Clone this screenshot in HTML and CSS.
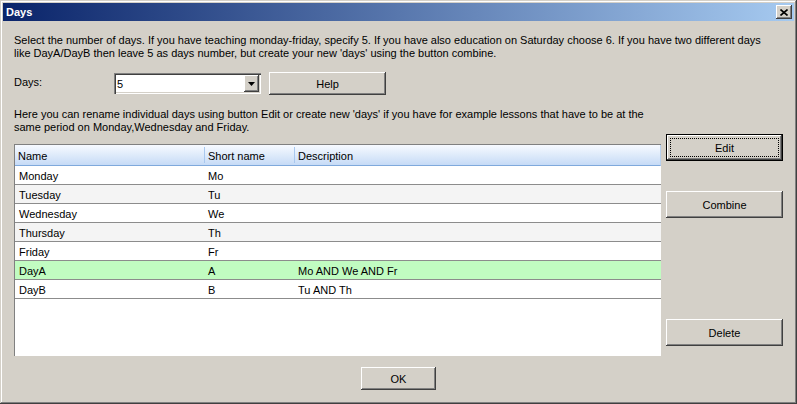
FILE: index.html
```html
<!DOCTYPE html>
<html>
<head>
<meta charset="utf-8">
<link rel="stylesheet" href="styles.css">
</head>
<body>
<div class="window">
    <div class="titleBar">
        <span class="titleText">Days</span>
        <span class="closeBtn">
            <svg width="8" height="7" viewBox="0 0 8 7"><path d="M0.5 0.5 L7.5 6.5 M7.5 0.5 L0.5 6.5" stroke="#000" stroke-width="1.6" fill="none"/></svg>
        </span>
    </div>

    <div class="content">
        <p class="intro">Select the number of days. If you have teaching monday-friday, specify 5. If you have also education on Saturday choose 6. If you have two different days<br>like DayA/DayB then leave 5 as days number, but create your new 'days' using the button combine.</p>

        <div class="daysRow">
            <span class="daysLabel">Days:</span>
            <div class="combo">
                <span class="comboValue">5</span>
                <span class="comboBtn">
                    <svg width="7" height="4" viewBox="0 0 7 4"><path d="M0 0 H7 L3.5 4 Z" fill="#000"/></svg>
                </span>
            </div>
            <div class="btn helpBtn">Help</div>
        </div>

        <div class="mainRow">
            <div class="leftCol">
                <p class="hint">Here you can rename individual days using button Edit or create new 'days' if you have for example lessons that have to be at the<br>same period on Monday,Wednesday and Friday.</p>

                <div class="grid">
                    <div class="gridHead">
                        <div class="hCell">Name</div>
                        <div class="hCell sep">Short name</div>
                        <div class="hCell sep">Description</div>
                    </div>
                    <div class="gridRow"><div class="cell">Monday</div><div class="cell">Mo</div><div class="cell"></div></div>
                    <div class="gridRow alt"><div class="cell">Tuesday</div><div class="cell">Tu</div><div class="cell"></div></div>
                    <div class="gridRow"><div class="cell">Wednesday</div><div class="cell">We</div><div class="cell"></div></div>
                    <div class="gridRow alt"><div class="cell">Thursday</div><div class="cell">Th</div><div class="cell"></div></div>
                    <div class="gridRow"><div class="cell">Friday</div><div class="cell">Fr</div><div class="cell"></div></div>
                    <div class="gridRow combined"><div class="cell">DayA</div><div class="cell">A</div><div class="cell">Mo AND We AND Fr</div></div>
                    <div class="gridRow"><div class="cell">DayB</div><div class="cell">B</div><div class="cell">Tu AND Th</div></div>
                </div>
            </div>

            <div class="sideButtons">
                <div class="btn sideBtn defaultBtn"><span class="focusRect">Edit</span></div>
                <div class="btn sideBtn">Combine</div>
                <div class="btn sideBtn deleteBtn">Delete</div>
            </div>
        </div>

        <div class="footer">
            <div class="btn okBtn">OK</div>
        </div>
    </div>
</div>
</body>
</html>
```

FILE: styles.css
```css
body{
    margin: 0;
    font-family: "Liberation Sans", Arial, sans-serif;
    font-size: 11px;
    color: #000;
}

.window{
    width: 797px;
    height: 404px;
    box-sizing: border-box;
    padding: 3px;
    background-color: #D4D0C8;
    box-shadow: inset -1px -1px #404040, inset 1px 1px #D4D0C8, inset -2px -2px #808080, inset 2px 2px #fff;
    display: flex;
    flex-direction: column;
}

.titleBar{
    height: 18px;
    background: linear-gradient(to right, #0A246A, #A6CAF0);
    display: flex;
    align-items: center;
    justify-content: space-between;
    padding: 0 2px 0 3px;
}

.titleText{
    color: #fff;
    font-weight: bold;
    font-size: 11px;
}

.closeBtn{
    width: 16px;
    height: 14px;
    box-sizing: border-box;
    background-color: #D4D0C8;
    box-shadow: inset -1px -1px #404040, inset 1px 1px #fff, inset -2px -2px #808080;
    display: flex;
    align-items: center;
    justify-content: center;
}

.content{
    flex: 1;
    padding: 0 11px 0 11px;
    display: flex;
    flex-direction: column;
}

p{
    margin: 0;
    line-height: 13px;
    white-space: nowrap;
}

.intro{
    margin-top: 13px;
}

.daysRow{
    display: flex;
    align-items: flex-start;
    margin-top: 12px;
    height: 23px;
}

.daysLabel{
    width: 100px;
    margin-top: 4px;
}

.combo{
    width: 147px;
    height: 21px;
    margin-top: 1px;
    box-sizing: border-box;
    background-color: #fff;
    box-shadow: inset 1px 1px #808080, inset 2px 2px #404040, inset -1px -1px #fff, inset -2px -2px #D4D0C8;
    display: flex;
    align-items: center;
    justify-content: space-between;
    padding: 0 2px 0 3px;
}

.comboValue{
    padding-top: 1px;
}

.comboBtn{
    width: 15px;
    height: 17px;
    box-sizing: border-box;
    background-color: #D4D0C8;
    box-shadow: inset -1px -1px #404040, inset 1px 1px #fff, inset -2px -2px #808080;
    display: flex;
    align-items: center;
    justify-content: center;
}

.btn{
    box-sizing: border-box;
    background-color: #D4D0C8;
    box-shadow: inset -1px -1px #404040, inset 1px 1px #fff, inset -2px -2px #808080;
    display: flex;
    align-items: center;
    justify-content: center;
}

.helpBtn{
    width: 117px;
    height: 23px;
    margin-left: 8px;
}

.mainRow{
    display: flex;
    margin-top: 13px;
}

.leftCol{
    width: 647px;
}

.grid{
    margin-top: 10px;
    height: 212px;
    box-sizing: border-box;
    background-color: #fff;
    border-top: 1px solid #808080;
    border-left: 1px solid #808080;
}

.gridHead, .gridRow{
    display: grid;
    grid-template-columns: 189px 90px 1fr;
}

.gridHead{
    height: 21px;
    box-sizing: border-box;
    background: linear-gradient(to bottom, #F7FAFF, #C6DBF6);
    border-bottom: 1px solid #7FA9DC;
    border-right: 1px solid #B9D1EE;
}

.hCell{
    padding: 1px 0 0 3px;
    display: flex;
    align-items: center;
}

.hCell.sep{
    border-left: 1px solid #A9C8EE;
    margin: 2px 0 2px 0;
}

.gridRow{
    height: 19px;
    box-sizing: border-box;
    border-bottom: 1px solid #8C8C8C;
}

.gridRow.alt{
    background-color: #F4F4F4;
}

.gridRow.combined{
    background-color: #C1FCC1;
}

.cell{
    padding: 1px 0 0 4px;
    display: flex;
    align-items: center;
}

.sideButtons{
    display: flex;
    flex-direction: column;
    margin-left: 5px;
    padding-top: 26px;
}

.sideBtn{
    width: 117px;
    height: 27px;
}

.defaultBtn{
    border: 1px solid #000;
    padding: 3px;
}

.focusRect{
    width: 100%;
    height: 100%;
    box-sizing: border-box;
    border: 1px dotted #000;
    display: flex;
    align-items: center;
    justify-content: center;
}

.sideBtn + .sideBtn{
    margin-top: 30px;
}

.sideBtn.deleteBtn{
    margin-top: 101px;
}

.footer{
    display: flex;
    justify-content: center;
    margin-top: 11px;
}

.okBtn{
    width: 75px;
    height: 23px;
}
```
